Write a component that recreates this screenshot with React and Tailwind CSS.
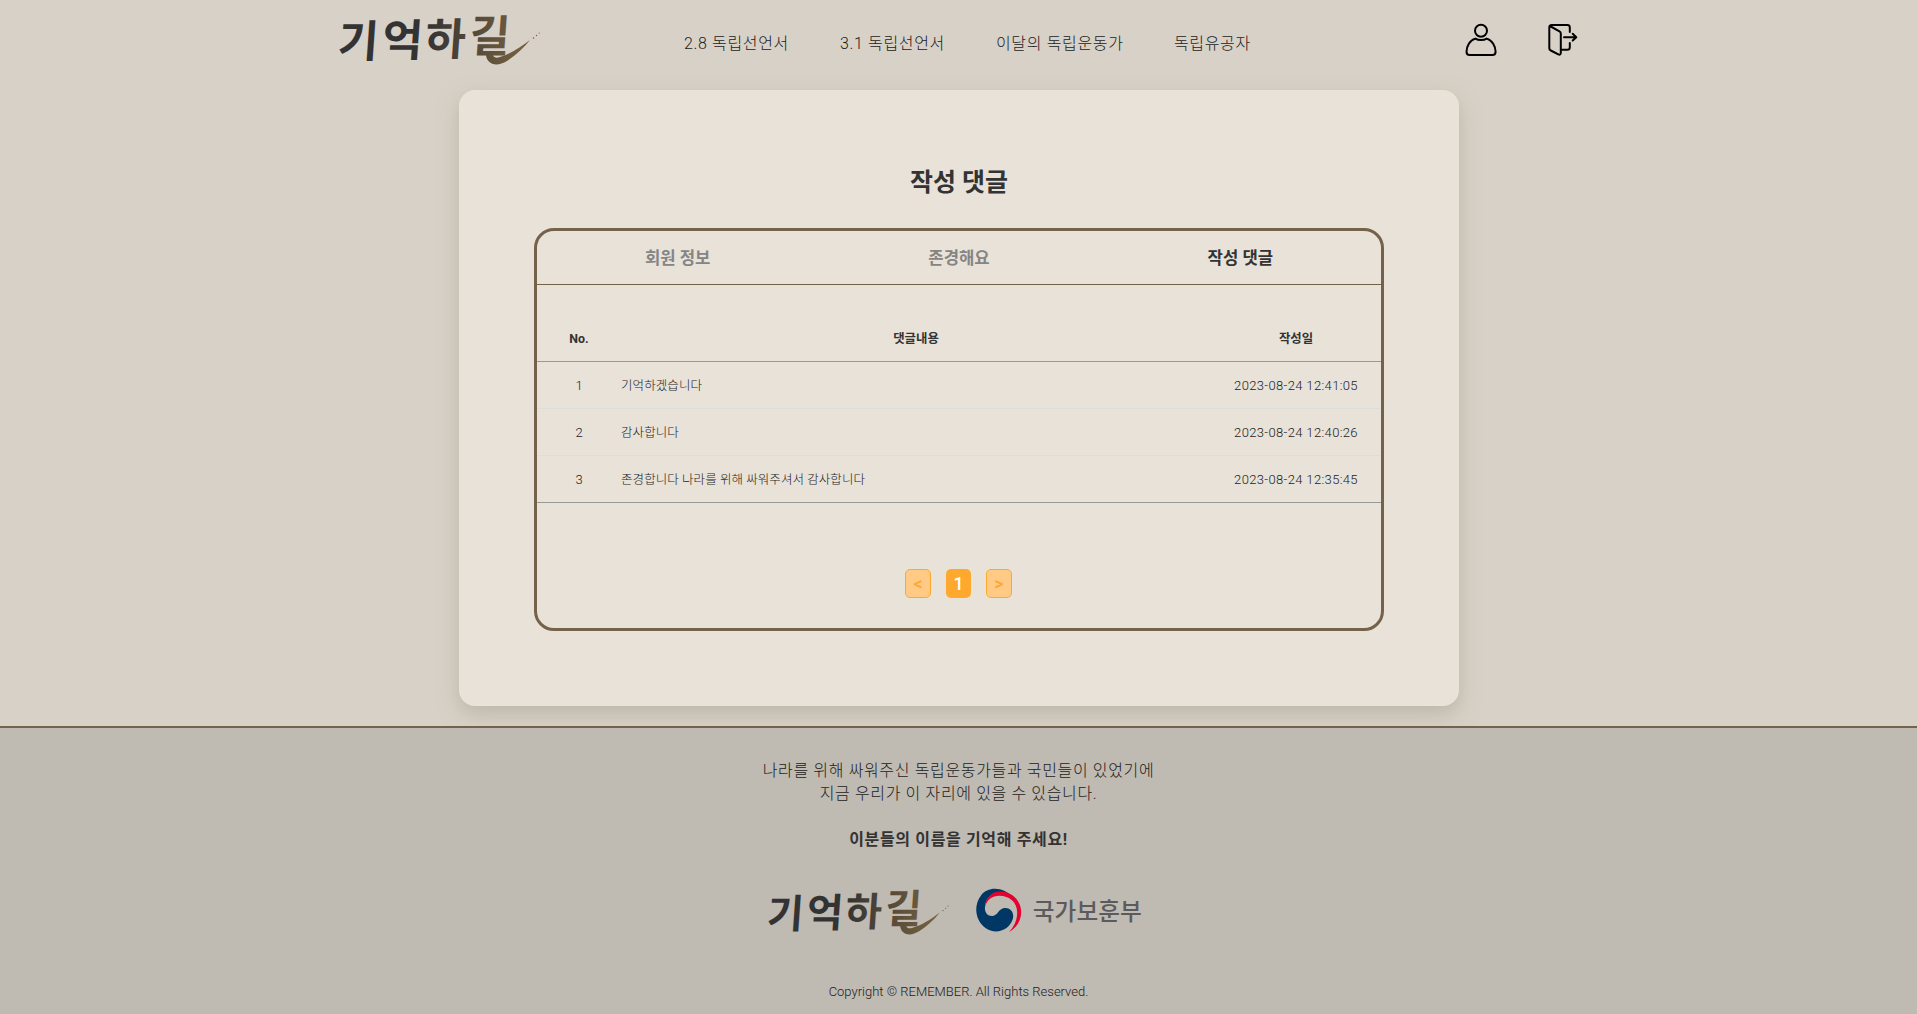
const KR = "font-['Roboto','Noto_Sans_CJK_KR',sans-serif]";

const NAV = [
  { label: '2.8 독립선언서', width: 'w-[105px]' },
  { label: '3.1 독립선언서', width: 'w-[105px]' },
  { label: '이달의 독립운동가', width: 'w-[127px]' },
  { label: '독립유공자', width: 'w-[78px]' },
];

const TABS = ['회원 정보', '존경해요', '작성 댓글'];

const COMMENTS = [
  { no: 1, text: '기억하겠습니다', date: '2023-08-24 12:41:05' },
  { no: 2, text: '감사합니다', date: '2023-08-24 12:40:26' },
  { no: 3, text: '존경합니다 나라를 위해 싸워주셔서 감사합니다', date: '2023-08-24 12:35:45' },
];

function Wordmark({ id, className }) {
  return (
    <svg viewBox="0 0 204 54" className={`overflow-visible ${className}`}>
      <defs>
        <linearGradient id={id} gradientUnits="userSpaceOnUse" x1="0" y1="0" x2="204" y2="0">
          <stop offset="0.42" stopColor="#333333" />
          <stop offset="0.9" stopColor="#75603f" />
        </linearGradient>
      </defs>
      <g fill={`url(#${id})`}>
        <text
          x="-1 43 86 130"
          y="42 41 40 37"
          fontSize="44"
          fontWeight="700"
          className="font-['Noto_Sans_CJK_KR',sans-serif]"
          transform="translate(3 1) skewX(-4)"
        >
          기억하길
        </text>
        <path d="M148 38 C147 50 158 54 169 47 C178 41 186 34 192 26 C183 33 172 40 162 43 C156 45 154 42 155 38 Z" />
        <circle cx="195.500" cy="24" r="0.8" />
        <circle cx="198.500" cy="21.500" r="0.7" />
        <circle cx="201.200" cy="19" r="0.6" />
      </g>
    </svg>
  );
}

function UserIcon() {
  return (
    <svg viewBox="0 0 32 34" className="h-[34px] w-8" fill="none" stroke="#000" strokeWidth="2" strokeLinejoin="round">
      <circle cx="16" cy="7.700" r="6" />
      <path d="M10.300 15.600 C4.800 17.200 1.500 23.300 1.500 28.800 C1.500 31 2.700 32 4.600 32 H27.500 C29.500 32 30.600 31 30.600 28.800 C30.600 23.300 27.200 17.200 21.700 15.600 C18.600 17.600 13.400 17.600 10.300 15.600 Z" />
    </svg>
  );
}

function ExitIcon() {
  return (
    <svg viewBox="0 0 30 34" className="h-[34px] w-[30px]" fill="none" stroke="#000" strokeWidth="2" strokeLinejoin="round" strokeLinecap="round">
      <path d="M1.800 3 L11.500 8.300 C12.400 8.800 12.800 9.500 12.800 10.500 V29.700 C12.800 31.500 11.800 32.100 10.300 31.300 L2.800 27.500 C1.800 27 1.300 26.300 1.300 25.200 V4.500 C1.300 2.700 2 2 3.700 2 H19.300 C21 2 21.800 2.800 21.800 4.400 V9" />
      <path d="M21.800 20 V24.200 C21.800 25.900 21 26.700 19.300 26.700 H13" />
      <path d="M16 14.200 H28 M24.700 10.800 L28.300 14.200 L24.700 17.600" />
    </svg>
  );
}

function TaegukEmblem() {
  return (
    <svg viewBox="0 0 46 45" className="h-[45px] w-[46px]">
      <path
        fill="#003764"
        d="M37 10 C28 -1.500 12 -2 5 7.500 C-3 18 -0.500 33 9.500 40 C19 47 33 43 36.800 31 C38.500 24 34 19.500 28.500 20 C22.500 20.500 22 27.500 16.500 28 C11 28.200 8.500 24 9 19 C9.500 10 16 4 25 4 C29 4 33 6 37 10 Z"
      />
      <path
        fill="#e4032e"
        d="M9 19.500 C9.500 9 16 3.600 24.500 3.600 C36 3.600 45.200 13 45.200 24 C45.200 34 39 41 33 44 C38 39 41.200 32 41.200 24.500 C41.200 14 33 7.800 23.500 7.800 C16 7.800 10.500 12 9 19.500 Z"
      />
    </svg>
  );
}

function Header() {
  return (
    <header className="flex h-[90px] items-start pl-[338px]">
      <Wordmark id="ink-header" className="mt-[14px] h-[54px] w-[204px] shrink-0" />
      <nav className="ml-[142px] mt-[32px] flex gap-[51px] text-[16px] font-light leading-6 tracking-[0.65px] text-[#1c1c1c]">
        {NAV.map((item) => (
          <a key={item.label} className={`${item.width} whitespace-nowrap`}>
            {item.label}
          </a>
        ))}
      </nav>
      <div className="ml-[213px] mt-[23px] flex gap-[51px]">
        <UserIcon />
        <ExitIcon />
      </div>
    </header>
  );
}

function CommentTable() {
  return (
    <div className="mt-[30px] border-b border-[#999]">
      <div className="grid h-[47px] grid-cols-[84px_590px_170px] items-center border-b border-[#999] pt-[2px] text-center text-[12.4px] font-bold">
        <span>No.</span>
        <span>댓글내용</span>
        <span>작성일</span>
      </div>
      {COMMENTS.map((c) => (
        <div
          key={c.no}
          className="grid h-[47px] grid-cols-[84px_590px_170px] items-center border-b border-[#dddddd] pt-[2px] text-center text-[12.5px] font-light text-[#1c1c1c] last:h-[46px] last:border-b-0"
        >
          <span className="text-[13px]">{c.no}</span>
          <span className="text-left tracking-[0.08px]">{c.text}</span>
          <span className="text-[13px] tracking-[0.36px]">{c.date}</span>
        </div>
      ))}
    </div>
  );
}

function Pagination() {
  const arrow =
    'flex h-[29px] w-[26px] items-center justify-center rounded-[5px] border border-[#ffa82e] bg-[#ffca86] text-[18px] font-medium text-[#ffa82e]';
  return (
    <div className="mt-[66px] flex justify-center gap-[15px] pr-px">
      <button className={arrow}>&lt;</button>
      <button className="flex h-[29px] w-[25px] items-center justify-center rounded-[5px] bg-[#ffa82e] text-[18px] font-medium text-white">
        1
      </button>
      <button className={arrow}>&gt;</button>
    </div>
  );
}

export default function App() {
  return (
    <div className={`flex h-[1014px] w-[1917px] flex-col bg-[#d8d1c7] text-[#333] ${KR}`}>
      <Header />
      <main className="ml-[459px] h-[616px] w-[1000px] shrink-0 rounded-[16px] bg-[#e8e2d8] px-[75px] pt-[74px] shadow-[0_8px_20px_rgba(160,160,138,0.5)]">
        <h1 className="h-[64px] pt-px text-center text-[25px] font-bold leading-9">작성 댓글</h1>
        <section className="h-[403px] rounded-[20px] border-[3px] border-[#75624a]">
          <div className="grid h-[54px] grid-cols-3 items-center border-b border-[#75624a] pt-[2px] text-center text-[16.7px] font-bold">
            {TABS.map((tab, i) => (
              <span key={tab} className={i === 2 ? 'text-[#333]' : 'text-[#858585]'}>
                {tab}
              </span>
            ))}
          </div>
          <CommentTable />
          <Pagination />
        </section>
      </main>
      <footer className="mt-5 flex h-[288px] shrink-0 flex-col items-center border-t-2 border-[#75624a] bg-[#bfbab2] pt-[31px]">
        <p className="text-center text-[16px] font-light leading-[23px] tracking-[0.65px] text-[#1c1c1c]">
          나라를 위해 싸워주신 독립운동가들과 국민들이 있었기에
          <br />
          지금 우리가 이 자리에 있을 수 있습니다.
        </p>
        <p className="mt-[23px] text-[16px] font-bold leading-[23px] tracking-[0.65px]">이분들의 이름을 기억해 주세요!</p>
        <div className="mt-[37px] flex h-[49px] items-start pr-[8px]">
          <Wordmark id="ink-footer" className="mt-[1px] h-[48.600px] w-[183.600px]" />
          <div className="ml-[25px] flex items-center gap-[11px]">
            <TaegukEmblem />
            <span className="text-[23.700px] font-medium leading-none text-[#5b5b5e] font-['Noto_Sans_CJK_KR',sans-serif]">국가보훈부</span>
          </div>
        </div>
        <p className="mt-[45px] text-[13px] font-light leading-5 text-[#1c1c1c]">Copyright © REMEMBER. All Rights Reserved.</p>
      </footer>
    </div>
  );
}
